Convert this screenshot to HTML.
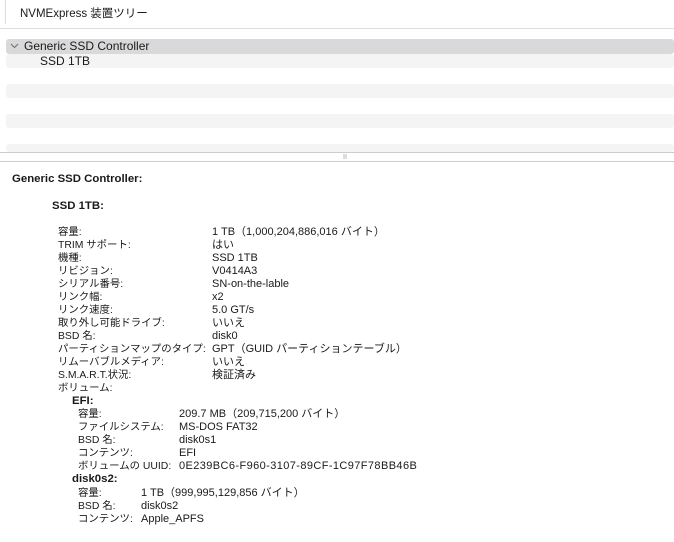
<!DOCTYPE html>
<html><head><meta charset="utf-8"><style>
body{margin:0;width:674px;height:542px;background:#fff;position:relative;overflow:hidden;font-family:"Liberation Sans","Noto Sans CJK JP",sans-serif;font-size:11px;color:#1a1a1a}
.a{position:absolute;white-space:nowrap;line-height:13px}
.l{font-size:10.4px}
.b{font-weight:bold;font-size:11.4px}
.row{position:absolute;left:6px;right:0;border-radius:3px}
</style></head><body>
<div class="a" style="left:20px;top:8px;font-size:11.5px">NVMExpress 装置ツリー</div>
<div style="position:absolute;left:5px;top:0;width:1px;height:24px;background:#ddd"></div>
<div style="position:absolute;left:0;right:0;top:28px;height:1px;background:#ddd"></div>
<div class="row" style="top:39px;height:15px;background:#d9d9db"></div>
<div class="row" style="top:54px;height:14px;background:#f4f4f5"></div>
<div class="row" style="top:84px;height:14px;background:#f4f4f5"></div>
<div class="row" style="top:114px;height:14px;background:#f4f4f5"></div>
<div class="row" style="top:144px;height:8px;background:#f4f4f5"></div>
<svg style="position:absolute;left:10px;top:43px" width="9" height="6"><path d="M1 1 L4.5 4.5 L8 1" stroke="#777" stroke-width="1.2" fill="none"/></svg>
<div class="a" style="left:24px;top:40px;font-size:12px">Generic SSD Controller</div>
<div class="a" style="left:40px;top:55px;font-size:12px">SSD 1TB</div>
<div style="position:absolute;left:0;right:0;top:152px;height:1px;background:#ccc"></div>
<div style="position:absolute;left:343px;top:154px;width:4px;height:5px;background:#ddd"></div>
<div style="position:absolute;left:0;right:0;top:161px;height:1px;background:#ccc"></div>
<div class="a b" style="left:12px;top:173px">Generic SSD Controller:</div>
<div class="a b" style="left:52px;top:200px">SSD 1TB:</div>
<div class="a l" style="left:58px;top:226px">容量:<br>TRIM サポート:<br>機種:<br>リビジョン:<br>シリアル番号:<br>リンク幅:<br>リンク速度:<br>取り外し可能ドライブ:<br>BSD 名:<br>パーティションマップのタイプ:<br>リムーバブルメディア:<br>S.M.A.R.T.状況:<br>ボリューム:</div>
<div class="a" style="left:212px;top:226px">1 TB（1,000,204,886,016 バイト）<br>はい<br>SSD 1TB<br>V0414A3<br>SN-on-the-lable<br>x2<br>5.0 GT/s<br>いいえ<br>disk0<br>GPT（GUID パーティションテーブル）<br>いいえ<br>検証済み</div>
<div class="a b" style="left:72px;top:395px">EFI:</div>
<div class="a l" style="left:78px;top:408px">容量:<br>ファイルシステム:<br>BSD 名:<br>コンテンツ:<br>ボリュームの UUID:</div>
<div class="a" style="left:179px;top:408px">209.7 MB（209,715,200 バイト）<br>MS-DOS FAT32<br>disk0s1<br>EFI<br><span style="letter-spacing:.4px">0E239BC6-F960-3107-89CF-1C97F78BB46B</span></div>
<div class="a b" style="left:72px;top:473px">disk0s2:</div>
<div class="a l" style="left:78px;top:487px">容量:<br>BSD 名:<br>コンテンツ:</div>
<div class="a" style="left:141px;top:487px">1 TB（999,995,129,856 バイト）<br>disk0s2<br>Apple_APFS</div>
</body></html>
